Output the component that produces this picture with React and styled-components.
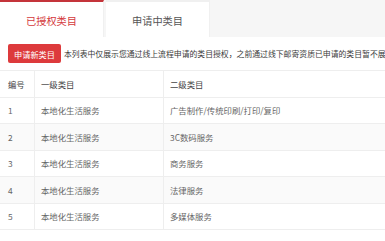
import React from "react";
import styled, { createGlobalStyle } from "styled-components";

const GlobalStyle = createGlobalStyle`
  body {
    margin: 0;
    background: #fff;
    font-family: "Noto Sans CJK SC", "Noto Sans", sans-serif;
  }
`;

const Page = styled.div`
  width: 385px;
  height: 241px;
  overflow: hidden;
  background: #fff;
`;

const TabBar = styled.div`
  display: flex;
  height: 37px;
  background: #f6f6f6;
`;

const Tab = styled.div`
  width: 104px;
  margin-left: ${(p) => (p.active ? "0" : "2px")};
  box-sizing: border-box;
  display: flex;
  align-items: center;
  justify-content: center;
  background: #fff;
  border-top: 2px solid ${(p) => (p.active ? "#c4343a" : "#f0f0f0")};
  border-right: 1px solid #f0f0f0;
  color: ${(p) => (p.active ? "#d4393c" : "#555")};
  font-size: 10.2px;
  padding-top: 2px;
`;

const Toolbar = styled.div`
  display: flex;
  align-items: center;
  gap: 3px;
  padding: 7px 0 0 8px;
  white-space: nowrap;
  overflow: hidden;
`;

const Button = styled.button`
  flex: none;
  width: 53px;
  height: 19px;
  padding: 0;
  border: none;
  border-radius: 2px;
  background: #dd3a3c;
  color: #fff;
  font-family: inherit;
  font-size: 8.2px;
`;

const Note = styled.span`
  color: #3a3a3a;
  font-size: 7.85px;
`;

const Table = styled.table`
  margin-top: 7px;
  width: 100%;
  border-collapse: collapse;
  font-size: 8.4px;
  color: #666;
`;

const Row = styled.tr`
  height: 26.5px;
  background: ${(p) => (p.striped ? "#fafafa" : "#fff")};
  border-top: 1px solid #eee;
  border-bottom: 1px solid #eee;
`;

const Cell = styled.td`
  padding: 0 0 0 ${(p) => p.pad || 6}px;
  width: ${(p) => p.w || "auto"};
  border-right: 1px solid #eee;
  text-align: left;
  font-weight: normal;
  color: ${(p) => (p.head ? "#444" : "#666")};
  &:last-child {
    border-right: none;
  }
`;

const rows = [
  ["1", "本地化生活服务", "广告制作/传统印刷/打印/复印"],
  ["2", "本地化生活服务", "3C数码服务"],
  ["3", "本地化生活服务", "商务服务"],
  ["4", "本地化生活服务", "法律服务"],
  ["5", "本地化生活服务", "多媒体服务"],
];

const App = () => (
  <>
    <GlobalStyle />
    <Page>
      <TabBar>
        <Tab active>已授权类目</Tab>
        <Tab>申请中类目</Tab>
      </TabBar>
      <Toolbar>
        <Button>申请新类目</Button>
        <Note>
          本列表中仅展示您通过线上流程申请的类目授权，之前通过线下邮寄资质已申请的类目暂不展示
        </Note>
      </Toolbar>
      <Table>
        <tbody>
          <Row>
            <Cell as="th" head pad={8} w="26px">编号</Cell>
            <Cell as="th" head w="122px">一级类目</Cell>
            <Cell as="th" head>二级类目</Cell>
          </Row>
          {rows.map((r, i) => (
            <Row key={r[0]} striped={i % 2 === 1}>
              <Cell pad={8}>{r[0]}</Cell>
              <Cell>{r[1]}</Cell>
              <Cell>{r[2]}</Cell>
            </Row>
          ))}
        </tbody>
      </Table>
    </Page>
  </>
);

export default App;
